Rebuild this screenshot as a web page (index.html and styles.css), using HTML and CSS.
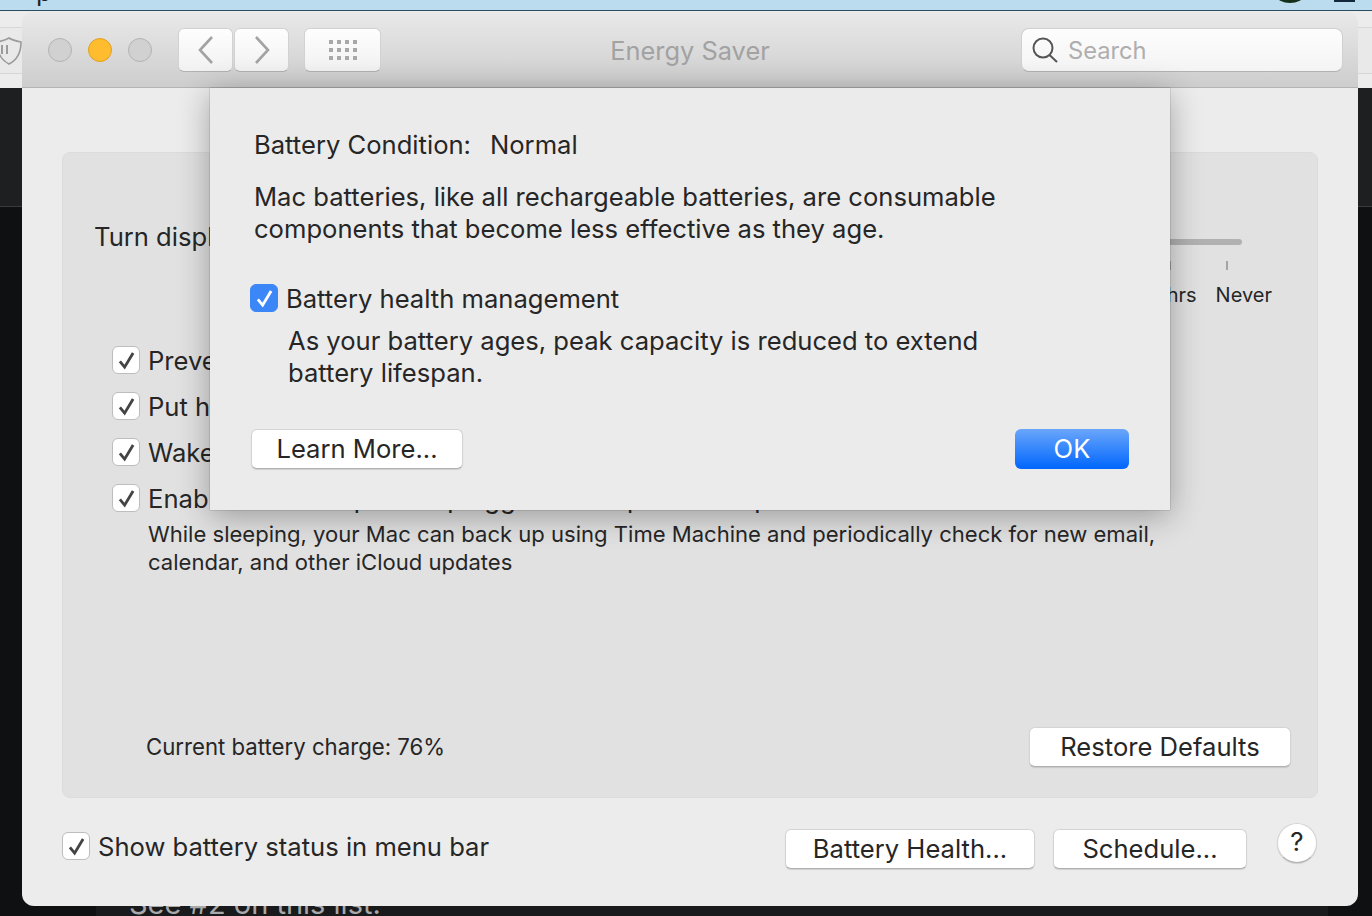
FILE: index.html
```html
<!DOCTYPE html>
<html>
  <head>
    <meta charset="UTF-8">
    <title>Energy Saver</title>
    <link rel="stylesheet" href="styles.css">
  </head>
  <body>
    <div class="desktop">
      <div class="menubar">
        <span class="menuText">p</span>
        <span class="menuBlob"></span>
        <span class="menuIcon"></span>
      </div>
      <div class="browserBar">
        <div class="browserStrip">
          <svg class="shield" width="26" height="30" viewBox="0 0 26 30">
            <path d="M1 6 C6 5 10 4 13 2 C16 4 20 5 25 6 C25 16 21 24 13 28 C5 24 1 16 1 6 Z" fill="none" stroke="#9b9b9b" stroke-width="1.6"/>
            <rect x="5" y="9" width="2" height="9" fill="#9b9b9b"/>
            <rect x="10" y="9" width="2" height="9" fill="#9b9b9b"/>
          </svg>
        </div>
      </div>
      <div class="darkBand"></div>
      <div class="darkPage">
        <div class="pageColumn">See #2 on this list.</div>
      </div>

      <div class="window">
        <div class="titlebar">
          <div class="lights">
            <span class="light"></span>
            <span class="light yellow"></span>
            <span class="light"></span>
          </div>
          <div class="navGroup">
            <div class="toolButton navButton">
              <svg width="18" height="30" viewBox="0 0 18 30"><path d="M15 2 L3 15 L15 28" fill="none" stroke="#a3a3a3" stroke-width="2.6"/></svg>
            </div>
            <div class="toolButton navButton">
              <svg width="18" height="30" viewBox="0 0 18 30"><path d="M3 2 L15 15 L3 28" fill="none" stroke="#a3a3a3" stroke-width="2.6"/></svg>
            </div>
          </div>
          <div class="toolButton gridButton">
            <svg width="30" height="22" viewBox="0 0 30 22" fill="#a8a8a8">
              <rect x="1" y="1" width="4" height="4"/><rect x="9" y="1" width="4" height="4"/><rect x="17" y="1" width="4" height="4"/><rect x="25" y="1" width="4" height="4"/>
              <rect x="1" y="9" width="4" height="4"/><rect x="9" y="9" width="4" height="4"/><rect x="17" y="9" width="4" height="4"/><rect x="25" y="9" width="4" height="4"/>
              <rect x="1" y="17" width="4" height="4"/><rect x="9" y="17" width="4" height="4"/><rect x="17" y="17" width="4" height="4"/><rect x="25" y="17" width="4" height="4"/>
            </svg>
          </div>
          <div class="winTitle">Energy Saver</div>
          <div class="searchBox">
            <svg width="26" height="26" viewBox="0 0 26 26"><circle cx="11" cy="11" r="9.5" fill="none" stroke="#555" stroke-width="2"/><path d="M17.5 18 L25 25" fill="none" stroke="#555" stroke-width="2"/></svg>
            <span class="searchText">Search</span>
          </div>
        </div>

        <div class="content">
          <div class="panel">
            <div class="sliderRow">
              <div class="sliderLabel">Turn display off after:</div>
              <div class="slider">
                <div class="track"></div>
                <div class="ticks">
                  <span class="tick"></span>
                  <span class="tick"></span>
                </div>
                <div class="tickLabels">
                  <span>3 hrs</span>
                  <span>Never</span>
                </div>
              </div>
            </div>
            <div class="options">
              <label class="option"><span class="check"><svg class="tickMark" viewBox="0 0 18 20"><path d="M2 11 L7 17 L16 2" fill="none" stroke="#444" stroke-width="3"/></svg></span>Prevent computer from sleeping automatically when the display is off</label>
              <label class="option"><span class="check"><svg class="tickMark" viewBox="0 0 18 20"><path d="M2 11 L7 17 L16 2" fill="none" stroke="#444" stroke-width="3"/></svg></span>Put hard disks to sleep when possible</label>
              <label class="option"><span class="check"><svg class="tickMark" viewBox="0 0 18 20"><path d="M2 11 L7 17 L16 2" fill="none" stroke="#444" stroke-width="3"/></svg></span>Wake for network access</label>
              <label class="option"><span class="check"><svg class="tickMark" viewBox="0 0 18 20"><path d="M2 11 L7 17 L16 2" fill="none" stroke="#444" stroke-width="3"/></svg></span>Enable Power Nap while plugged into a power adapter</label>
              <div class="optionNote">While sleeping, your Mac can back up using Time Machine and periodically check for new email,<br>calendar, and other iCloud updates</div>
            </div>
            <div class="panelFoot">
              <div class="charge">Current battery charge: 76%</div>
              <div class="button restoreButton">Restore Defaults</div>
            </div>
          </div>

          <div class="bottomRow">
            <label class="option showStatus"><span class="check"><svg class="tickMark" viewBox="0 0 18 20"><path d="M2 11 L7 17 L16 2" fill="none" stroke="#444" stroke-width="3"/></svg></span>Show battery status in menu bar</label>
            <div class="button healthButton">Battery Health...</div>
            <div class="button scheduleButton">Schedule...</div>
            <div class="helpButton">?</div>
          </div>
        </div>

        <div class="sheet">
          <div class="condition"><span class="conditionLabel">Battery Condition:</span><span>Normal</span></div>
          <p class="sheetText">Mac batteries, like all rechargeable batteries, are consumable<br>components that become less effective as they age.</p>
          <label class="option sheetOption"><span class="check blueCheck"><svg class="tickMark" viewBox="0 0 18 20"><path d="M2 11 L7 17 L16 2" fill="none" stroke="#fff" stroke-width="3"/></svg></span>Battery health management</label>
          <p class="sheetText sheetNote">As your battery ages, peak capacity is reduced to extend<br>battery lifespan.</p>
          <div class="sheetButtons">
            <div class="button learnButton">Learn More...</div>
            <div class="button okButton">OK</div>
          </div>
        </div>
      </div>
    </div>
  </body>
</html>
```

FILE: styles.css
```css
* {
  box-sizing: border-box;
  font-family: Inter, "Noto Sans", Arial, sans-serif;
}

html, body {
  margin: 0;
  padding: 0;
}

.desktop {
  position: relative;
  width: 1372px;
  height: 916px;
  overflow: hidden;
  background-color: #101112;
  display: flex;
  flex-direction: column;
}

.menubar {
  height: 11px;
  flex: none;
  background-color: #bbdcef;
  border-bottom: 1px solid #2d4a63;
  overflow: hidden;
  position: relative;
}

.menuText {
  position: absolute;
  left: 36px;
  top: -24px;
  font-size: 26px;
  color: #222;
}

.menuBlob {
  position: absolute;
  left: 1277px;
  top: -10px;
  width: 26px;
  height: 13px;
  border-radius: 50%;
  background-color: #14301a;
}

.menuIcon {
  position: absolute;
  left: 1334px;
  top: 0;
  width: 21px;
  height: 2px;
  background-color: #12283a;
}

.browserBar {
  height: 77px;
  flex: none;
  background-color: #ececec;
  padding-top: 16px;
  overflow: hidden;
}

.browserStrip {
  height: 47px;
  padding-top: 8px;
  background-color: #e9e9e9;
  border-top: 1px solid #d6d6d6;
  border-bottom: 1px solid #d6d6d6;
}

.shield {
  display: block;
  margin-left: -4px;
}

.darkBand {
  height: 119px;
  flex: none;
  background-color: #1e1f20;
  border-bottom: 1px solid #3a3a3b;
}

.darkPage {
  flex: 1;
  padding-left: 96px;
  display: flex;
  background-color: #0f1011;
}

.pageColumn {
  flex: 1;
  padding: 680px 0 0 33px;
  background-color: #191a1b;
  color: #a9a9a9;
  font-size: 29px;
  line-height: 34px;
  margin-right: 44px;
}

.window {
  position: absolute;
  left: 22px;
  top: 12px;
  width: 1336px;
  height: 894px;
  border-radius: 10px 10px 12px 12px;
  background-color: #ececec;
  overflow: hidden;
}

.titlebar {
  height: 76px;
  display: flex;
  align-items: flex-start;
  padding: 16px 15px 0 26px;
  background: linear-gradient(#e9e9e9, #cdcdcd);
  border-bottom: 1px solid #b4b4b4;
  position: relative;
}

.lights {
  display: flex;
  gap: 16px;
  padding-top: 10px;
  margin-right: 26px;
}

.light {
  width: 24px;
  height: 24px;
  border-radius: 50%;
  background-color: #d1d1d1;
  border: 1px solid #b2b2b2;
}

.yellow {
  background-color: #febc2e;
  border-color: #dfa123;
}

.navGroup {
  display: flex;
  gap: 1px;
  margin-right: 15px;
}

.toolButton {
  height: 44px;
  border-radius: 6px;
  background: linear-gradient(#fefefe, #f1f1f1);
  border: 1px solid #d2d2d2;
  border-bottom-color: #b2b2b2;
  display: flex;
  align-items: center;
  justify-content: center;
}

.navButton {
  width: 55px;
}

.gridButton {
  width: 77px;
}

.winTitle {
  position: absolute;
  left: 0;
  right: 0;
  top: 24px;
  text-align: center;
  font-size: 25.4px;
  line-height: 30px;
  color: #a2a2a2;
}

.searchBox {
  margin-left: auto;
  width: 322px;
  height: 44px;
  border-radius: 8px;
  background: linear-gradient(#fdfdfd, #f4f4f4);
  border: 1px solid #d0d0d0;
  border-bottom-color: #b2b2b2;
  display: flex;
  align-items: center;
  gap: 10px;
  padding-left: 10px;
}

.searchText {
  font-size: 23.7px;
  color: #aeaeae;
}

.content {
  padding: 64px 40px 0 40px;
}

.panel {
  height: 646px;
  border: 1px solid #dcdcdc;
  border-radius: 8px;
  background-color: #e1e1e1;
  position: relative;
}

.sliderRow {
  display: flex;
  padding: 68px 0 0 31px;
  height: 192px;
}

.sliderLabel {
  font-size: 25.6px;
  line-height: 32px;
  color: #262626;
  width: 270px;
}

.slider {
  width: 878px;
  padding-top: 18px;
}

.track {
  height: 6px;
  border-radius: 3px;
  background-color: #b1b1b1;
}

.ticks {
  display: flex;
  justify-content: flex-end;
  gap: 55px;
  padding: 16px 14px 0 0;
}

.tick {
  width: 2px;
  height: 9px;
  background-color: #a5a5a5;
}

.tickLabels {
  display: flex;
  justify-content: flex-end;
  gap: 19px;
  margin-right: -30px;
  padding-top: 12px;
  font-size: 20px;
  line-height: 26px;
  color: #262626;
}

.option {
  display: flex;
  align-items: center;
  gap: 8px;
  font-size: 25.6px;
  line-height: 32px;
  color: #262626;
  white-space: nowrap;
}

.options {
  padding-left: 49px;
  display: flex;
  flex-direction: column;
  gap: 14px;
}

.check {
  flex: none;
  width: 28px;
  height: 28px;
  margin-top: -2px;
  border-radius: 6px;
  background-color: #fff;
  border: 1px solid #bdbdbd;
  display: flex;
  align-items: center;
  justify-content: center;
}

.tickMark {
  width: 17px;
  height: 19px;
}

.blueCheck {
  background-color: #3b87f7;
  border-color: #3b87f7;
}

.optionNote {
  margin: -9px 0 0 36px;
  font-size: 22.05px;
  line-height: 28px;
  color: #262626;
  white-space: nowrap;
}

.panelFoot {
  position: absolute;
  left: 83px;
  right: 26px;
  bottom: 30px;
  display: flex;
  justify-content: space-between;
  align-items: center;
}

.charge {
  font-size: 22.2px;
  margin-top: -2px;
  color: #262626;
}

.button {
  height: 40px;
  padding-bottom: 2px;
  border-radius: 6px;
  background-color: #fff;
  border: 1px solid #d4d4d4;
  border-bottom-color: #b0b0b0;
  box-shadow: 0 1px 1px rgba(0, 0, 0, 0.12);
  display: flex;
  align-items: center;
  justify-content: center;
  font-size: 25.6px;
  color: #262626;
}

.restoreButton {
  width: 262px;
}

.bottomRow {
  display: flex;
  align-items: flex-start;
  padding: 25px 1px 0 0;
}

.showStatus {
  padding-top: 8px;
  margin-right: auto;
}

.healthButton {
  width: 250px;
  margin-top: 6px;
  margin-right: 18px;
}

.scheduleButton {
  width: 194px;
  margin-top: 6px;
  margin-right: 30px;
}

.helpButton {
  width: 40px;
  height: 40px;
  border-radius: 50%;
  background-color: #fff;
  border: 1px solid #d4d4d4;
  border-bottom-color: #b0b0b0;
  box-shadow: 0 1px 1px rgba(0, 0, 0, 0.12);
  text-align: center;
  font-size: 26px;
  line-height: 36px;
  color: #262626;
}

.sheet {
  position: absolute;
  left: 188px;
  top: 76px;
  width: 960px;
  height: 422px;
  padding: 41px 41px 0 44px;
  background-color: #ebebeb;
  box-shadow: 0 6px 30px rgba(0, 0, 0, 0.32), 0 0 1px rgba(0, 0, 0, 0.5);
  color: #262626;
}

.condition {
  display: flex;
  gap: 19px;
  font-size: 25.6px;
  line-height: 32px;
}

.sheetText {
  margin: 20px 0 0 0;
  font-size: 25.6px;
  line-height: 32px;
}

.sheetOption {
  margin: 38px 0 0 -4px;
}

.sheetNote {
  margin: 10px 0 0 34px;
}

.sheetButtons {
  display: flex;
  justify-content: space-between;
  margin: 40px 0 0 -3px;
}

.learnButton {
  width: 212px;
}

.okButton {
  width: 114px;
  color: #fff;
  border: none;
  border-radius: 6px;
  background: linear-gradient(#6aa6fb, #0066fd);
  box-shadow: none;
}
```
